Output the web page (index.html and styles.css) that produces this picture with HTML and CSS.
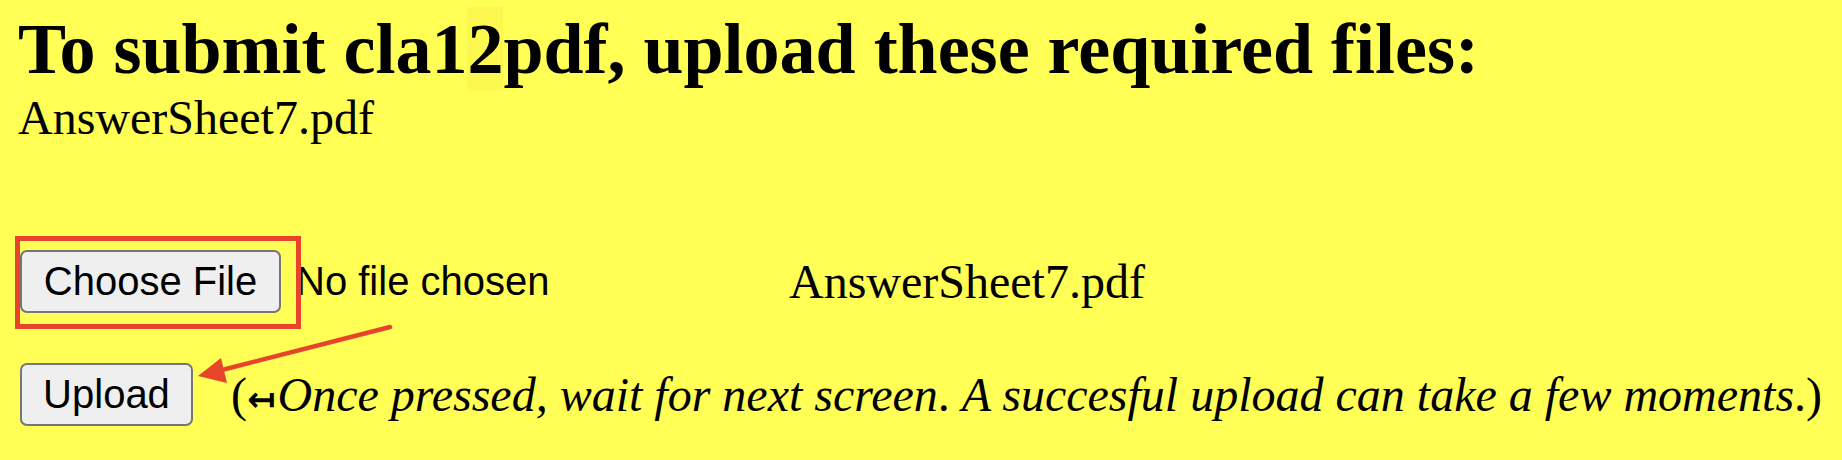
FILE: index.html
```html
<!DOCTYPE html>
<html lang="en">
<head>
<meta charset="utf-8">
<title>Upload required files</title>
<link rel="stylesheet" href="styles.css">
</head>
<body>
<div class="page">
  <h2 class="title">To submit cla1<span class="hl">2</span>pdf, upload these required files:</h2>
  <div class="required">AnswerSheet7.pdf</div>

  <form class="upload-form">
    <div class="file-row">
      <div class="chooser">
        <span class="btn btn-choose">Choose File</span>
        <span class="status">No file chosen</span>
        <span class="mark-box"></span>
      </div>
      <span class="fname">AnswerSheet7.pdf</span>
    </div>
    <div class="submit-row">
      <span class="btn btn-upload">Upload</span>
      <span class="note">(<span class="back">&#x21A4;</span><i>Once pressed, wait for next screen</i>. <i>A succesful upload can take a few moments</i>.)</span>
    </div>
  </form>

  <svg class="arrow" width="1842" height="460" viewBox="0 0 1842 460" aria-hidden="true">
    <line x1="390" y1="327" x2="218" y2="371" stroke="#e8442c" stroke-width="4.5" stroke-linecap="round"/>
    <polygon points="198,376 221,358 227,383" fill="#e8442c"/>
  </svg>
</div>
</body>
</html>
```
FILE: styles.css
```css
html, body {
  margin: 0;
  padding: 0;
  background: #ffff55;
}

.page {
  position: relative;
  width: 1842px;
  height: 460px;
  padding: 8px 0 0 18px;
  box-sizing: border-box;
  font-family: "Liberation Serif", "Times New Roman", serif;
  color: #000;
  overflow: hidden;
}

.title {
  margin: 0;
  font-size: 72px;
  line-height: 82px;
  font-weight: bold;
}

.hl {
  background: #fcf84f;
  padding: 2px 0;
}

.required {
  font-size: 48px;
  line-height: 55px;
}

.upload-form {
  margin: 0;
}

.file-row {
  display: flex;
  align-items: center;
  margin-top: 105px;
  padding-left: 2px;
}

.chooser {
  position: relative;
  display: flex;
  align-items: center;
  gap: 15px;
  width: 769px;
  flex: none;
}

.btn {
  display: inline-flex;
  align-items: center;
  justify-content: center;
  box-sizing: border-box;
  height: 63px;
  background: #efefef;
  border: 2.5px solid #767676;
  border-radius: 7px;
  font-family: "Liberation Sans", Arial, sans-serif;
  font-size: 40px;
  color: #000;
  padding: 0;
  white-space: nowrap;
  flex: none;
}

.btn-choose {
  width: 261px;
}

.status {
  font-family: "Liberation Sans", Arial, sans-serif;
  font-size: 40px;
  white-space: nowrap;
}

.mark-box {
  position: absolute;
  left: -5px;
  top: -14px;
  width: 286px;
  height: 93px;
  box-sizing: border-box;
  border: 5px solid #e8442c;
}

.fname {
  font-size: 48px;
  white-space: nowrap;
}

.submit-row {
  display: flex;
  align-items: center;
  gap: 38px;
  margin-top: 50px;
  padding-left: 2px;
}

.btn-upload {
  width: 173px;
}

.note {
  font-size: 48px;
  white-space: nowrap;
}

.note i {
  font-style: italic;
}

.back {
  font-family: "DejaVu Sans", sans-serif;
  font-weight: bold;
  font-size: 34px;
  margin-right: 2px;
}

.arrow {
  position: absolute;
  left: 0;
  top: 0;
  pointer-events: none;
}
```
